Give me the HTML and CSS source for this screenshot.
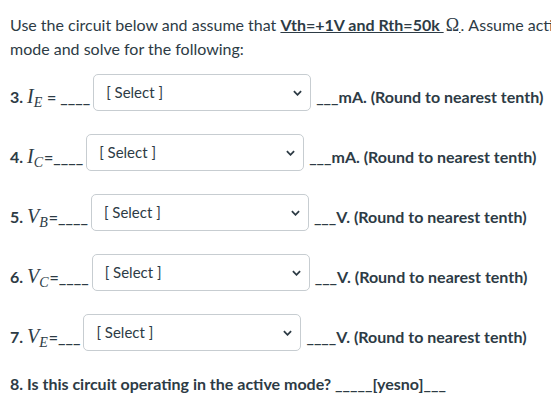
FILE: index.html
```html
<!DOCTYPE html>
<html>
<head>
<meta charset="utf-8">
<link rel="stylesheet" href="styles.css">
</head>
<body>
<div class="page">
  <p class="intro">Use the circuit below and assume that <span class="u">Vth=+1V and Rth=50k </span><span class="omega">Ω</span><span class="u thin">&nbsp;</span>. Assume active<br>mode and solve for the following:</p>

  <div class="row">
    <span class="lbl">3. <span class="m">I<sub>E</sub></span> = ____</span>
    <span class="sel"><span class="ph">[ Select ]</span><svg class="chev" viewBox="0 0 10 6" width="9" height="6"><path d="M1 1 L5 5 L9 1" fill="none" stroke="#2d3b45" stroke-width="2"/></svg></span>
    <span class="after">___mA. (Round to nearest tenth)</span>
  </div>

  <div class="row">
    <span class="lbl">4. <span class="m">I<sub>C</sub></span>=____</span>
    <span class="sel"><span class="ph">[ Select ]</span><svg class="chev" viewBox="0 0 10 6" width="9" height="6"><path d="M1 1 L5 5 L9 1" fill="none" stroke="#2d3b45" stroke-width="2"/></svg></span>
    <span class="after">___mA. (Round to nearest tenth)</span>
  </div>

  <div class="row">
    <span class="lbl">5. <span class="m">V<sub>B</sub></span>=____</span>
    <span class="sel"><span class="ph">[ Select ]</span><svg class="chev" viewBox="0 0 10 6" width="9" height="6"><path d="M1 1 L5 5 L9 1" fill="none" stroke="#2d3b45" stroke-width="2"/></svg></span>
    <span class="after">___V. (Round to nearest tenth)</span>
  </div>

  <div class="row">
    <span class="lbl">6. <span class="m">V<sub>C</sub></span>=____</span>
    <span class="sel"><span class="ph">[ Select ]</span><svg class="chev" viewBox="0 0 10 6" width="9" height="6"><path d="M1 1 L5 5 L9 1" fill="none" stroke="#2d3b45" stroke-width="2"/></svg></span>
    <span class="after">___V. (Round to nearest tenth)</span>
  </div>

  <div class="row">
    <span class="lbl">7. <span class="m">V<sub>E</sub></span>=___</span>
    <span class="sel"><span class="ph">[ Select ]</span><svg class="chev" viewBox="0 0 10 6" width="9" height="6"><path d="M1 1 L5 5 L9 1" fill="none" stroke="#2d3b45" stroke-width="2"/></svg></span>
    <span class="after">____V. (Round to nearest tenth)</span>
  </div>

  <p class="q8">8. Is this circuit operating in the active mode? _____[yesno]___</p>
</div>
</body>
</html>
```

FILE: styles.css
```css
html, body {
  margin: 0;
  padding: 0;
  overflow: hidden;
  background: #ffffff;
}
.page {
  width: 600px;
  padding: 13px 0 0 10px;
  font-family: Lato, "Open Sans", sans-serif;
  font-size: 16px;
  color: #2d3b45;
}
.intro {
  margin: 0 0 13px 0;
  line-height: 24px;
  white-space: nowrap;
}
.u {
  font-weight: bold;
  text-decoration: underline;
}
.thin {
  font-size: 6px;
  line-height: 1;
}
.omega {
  font-family: "Liberation Serif", serif;
  font-size: 18px;
  line-height: 1;
  padding-left: 2px;
}
.row {
  display: flex;
  align-items: center;
  height: 37px;
  margin-bottom: 23px;
  font-weight: bold;
  white-space: nowrap;
}
.lbl {
  margin-right: 3px;
  margin-top: 8px;
}
.after {
  margin-top: 8px;
}
.m {
  font-family: "Liberation Serif", serif;
  font-style: italic;
  font-weight: normal;
  font-size: 20px;
  padding-right: 1px;
}
.m sub {
  font-size: 14px;
  vertical-align: -4px;
  line-height: 0;
}
.sel {
  box-sizing: border-box;
  width: 218px;
  height: 37px;
  border: 1px solid #c7cdd1;
  border-radius: 5px;
  background: #fff;
  display: flex;
  align-items: center;
  justify-content: space-between;
  padding: 0 8px 0 12px;
  margin-right: 5px;
  font-weight: normal;
  font-size: 15px;
}
.ph {
  margin-top: -1px;
}
.chev {
  display: block;
}
.q8 {
  margin: -2px 0 0 0;
  font-weight: bold;
  line-height: 24px;
}
```
